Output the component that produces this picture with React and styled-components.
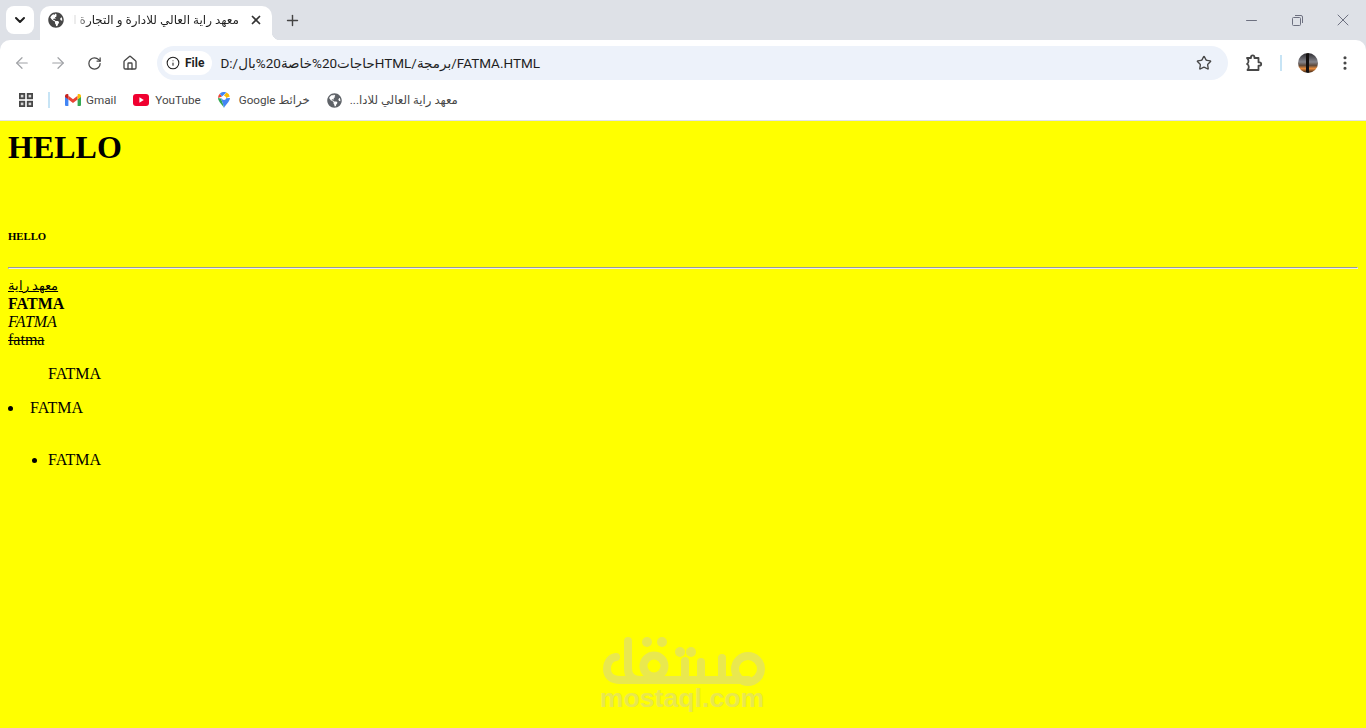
import styled, { createGlobalStyle } from 'styled-components'
import { ChevronDown, X, Plus, ArrowLeft, ArrowRight, RotateCw, House, Info, Star, Minus, EllipsisVertical } from 'lucide-react'
import { FaGlobeAmericas } from 'react-icons/fa'

const uiFont = 'Roboto, "Noto Sans", "DejaVu Sans", sans-serif'
const pageFont = '"Liberation Serif", "DejaVu Serif", serif'

const GlobalStyle = createGlobalStyle`
  html, body {
    margin: 0;
    padding: 0;
    height: 100%;
    overflow: hidden;
    background: #ffff00;
  }
`

function GmailIcon() {
  return (
    <svg width='16' height='12' viewBox='0 0 16 12'>
      <path d='M0 2v9a1 1 0 0 0 1 1h2.400V5.600z' fill='#4285f4' />
      <path d='M16 2v9a1 1 0 0 1-1 1h-2.400V5.600z' fill='#34a853' />
      <path d='M3.400 5.600 8 9l4.600-3.400V1.800L8 5.200 3.400 1.800z' fill='#ea4335' />
      <path d='M0 2c0-1.700 2-2.500 3.400-1.500v5.100L0 3.100z' fill='#c5221f' />
      <path d='M16 2c0-1.700-2-2.500-3.400-1.500v5.100L16 3.100z' fill='#fbbc04' />
    </svg>
  )
}

function YoutubeIcon() {
  return (
    <svg width='16' height='12' viewBox='0 0 16 12'>
      <rect width='16' height='12' rx='3' fill='#f00030' />
      <path d='M6.400 3.300 10.800 6l-4.400 2.700z' fill='#fff' />
    </svg>
  )
}

function MapsIcon() {
  return (
    <svg width='12' height='16' viewBox='0 0 12 16'>
      <path d='M6 16C4.800 13 0 9.500 0 6l3 0.500L5 12z' fill='#34a853' />
      <path d='M6 16c1.200-3 6-6.500 6-10L3 6.500 5 12z' fill='#4285f4' />
      <path d='M1.800 1.700A6 6 0 0 0 0 6l4-1.500z' fill='#ea4335' />
      <path d='M1.800 1.700 4 4.500 8.500.6A6 6 0 0 0 1.800 1.700z' fill='#4285f4' />
      <path d='M8.500.6 6 3.500l2 2.500 3.800-1.500A6 6 0 0 0 8.500.6z' fill='#fbbc04' />
      <circle cx='6' cy='6' r='2.100' fill='#fff' />
    </svg>
  )
}

function PuzzleIcon() {
  return (
    <svg width='18' height='18' viewBox='0 0 18 18' fill='none' stroke='#474747' strokeWidth='1.800' strokeLinejoin='round'>
      <path d='M2 4h4V3a1.700 1.700 0 0 1 3.400 0v1h4.100v4.300h1a1.700 1.700 0 0 1 0 3.400h-1V16H2.500c1-1 1.300-2 1.300-3S3 10.500 2 10c1-.5 1.500-1.500 1.500-3S3 5 2 4z' />
    </svg>
  )
}

function RestoreIcon() {
  return (
    <svg width='11' height='11' viewBox='0 0 11 11' fill='none' stroke='#6d7080' strokeWidth='1'>
      <rect x='0.500' y='2.500' width='8' height='8' rx='1' />
      <path d='M3 .5h6a1.500 1.500 0 0 1 1.500 1.500v6' />
    </svg>
  )
}

function AppsIcon() {
  return (
    <svg width='16' height='16' viewBox='0 0 16 16' fill='#d8d8d8' stroke='#474747' strokeWidth='1.800'>
      <rect x='1.900' y='1.900' width='4.400' height='4.400' />
      <rect x='9.700' y='1.900' width='4.400' height='4.400' />
      <rect x='1.900' y='9.700' width='4.400' height='4.400' />
      <rect x='9.700' y='9.700' width='4.400' height='4.400' />
    </svg>
  )
}

// the viewBox is in page pixels, which keeps the mark easy to line up
function MostaqlMark() {
  return (
    <svg width='170' height='52' viewBox='598 636 170 52' fill='none' stroke='#e9e84f' strokeWidth='8' strokeLinecap='round' strokeLinejoin='round'>
      <path d='M616 657C609 658 607 664 607 669C607 676 612 680 620 680H748' />
      <path d='M628 641V668C628 676 632 680 640 680' />
      <circle cx='654' cy='666' r='10.500' />
      <circle cx='748' cy='669' r='13' />
      <path d='M685 661V680M701 662V680M722 658V680' />
      <g fill='#e9e84f' stroke='none'>
        <circle cx='647' cy='642' r='5' />
        <circle cx='662' cy='642' r='5' />
        <circle cx='680' cy='652' r='5' />
        <circle cx='691' cy='652' r='5' />
      </g>
    </svg>
  )
}

export default function App() {
  return (
    <Window>
      <GlobalStyle />
      <TitleBar>
        <TabSearch><ChevronDown size={16} strokeWidth={3} /></TabSearch>
        <Tab>
          <FaGlobeAmericas size={16} color='#474747' />
          <TabTitle dir='rtl'>معهد راية العالي للادارة و التجارة الخارجية</TabTitle>
          <X size={14} strokeWidth={3} color='#333' />
        </Tab>
        <NewTab><Plus size={17} strokeWidth={2} /></NewTab>
        <WindowControls>
          <WindowControl><Minus size={17} absoluteStrokeWidth strokeWidth={1} /></WindowControl>
          <WindowControl><RestoreIcon /></WindowControl>
          <WindowControl><X size={20} absoluteStrokeWidth strokeWidth={1} /></WindowControl>
        </WindowControls>
      </TitleBar>

      <Toolbar>
        <NavButton $muted><ArrowLeft size={18} strokeWidth={1.6} /></NavButton>
        <NavButton $muted><ArrowRight size={18} strokeWidth={1.6} /></NavButton>
        <NavButton><RotateCw size={15} strokeWidth={2} /></NavButton>
        <NavButton><House size={16} strokeWidth={2} /></NavButton>
        <Omnibox>
          <FileChip><Info size={14} strokeWidth={1.8} />File</FileChip>
          <Url>{'D:/\u200Eبال\u200E%20\u200Eخاصة\u200E%20\u200Eحاجات\u200EHTML/\u200Eبرمجة\u200E/FATMA.HTML'}</Url>
          <Star size={16} strokeWidth={2} color='#474747' />
        </Omnibox>
        <ToolbarActions>
          <PuzzleIcon />
          <ToolbarDivider />
          <Avatar />
          <EllipsisVertical size={18} strokeWidth={2.2} color='#474747' />
        </ToolbarActions>
      </Toolbar>

      <Bookmarks>
        <AppsIcon />
        <BookmarkDivider />
        <Bookmark $gap={5}><GmailIcon />Gmail</Bookmark>
        <Bookmark $gap={6}><YoutubeIcon />YouTube</Bookmark>
        <Bookmark $gap={9}><MapsIcon />{'Google \u200Eخرائط'}</Bookmark>
        <Bookmark $gap={8}><FaGlobeAmericas size={15} color='#5f6368' /><span dir='rtl'>معهد راية العالي للادا...</span></Bookmark>
      </Bookmarks>

      <Page>
        <Heading>HELLO</Heading>
        <SmallHeading>HELLO</SmallHeading>
        <Rule />
        <PageLink href='#'>معهد راية</PageLink>
        <br />
        <b>FATMA</b>
        <br />
        <i>FATMA</i>
        <br />
        <s>fatma</s>
        <Quote>FATMA</Quote>
        <OuterList>
          <OuterItem>FATMA</OuterItem>
        </OuterList>
        <InnerList>
          <li>FATMA</li>
        </InnerList>
      </Page>

      <Watermark>
        <MostaqlMark />
        <WatermarkText>mostaql.com</WatermarkText>
      </Watermark>
    </Window>
  )
}

const Window = styled.div`
  position: relative;
  display: flex;
  flex-direction: column;
  height: 728px;
  overflow: hidden;
  background: #dee1e7;
  font-family: ${uiFont};
`

const TitleBar = styled.div`
  display: flex;
  align-items: flex-end;
  height: 40px;
  padding-left: 6px;
  flex-shrink: 0;
`

const TabSearch = styled.div`
  display: flex;
  align-items: center;
  justify-content: center;
  width: 28px;
  height: 28px;
  margin-bottom: 6px;
  border-radius: 8px;
  background: #fff;
  color: #1f1f1f;
`

const Tab = styled.div`
  position: relative;
  display: flex;
  align-items: center;
  gap: 8px;
  width: 232px;
  height: 34px;
  margin-left: 6px;
  padding: 0 9px 6px 8px;
  box-sizing: border-box;
  border-radius: 10px 10px 0 0;
  background: #fff;

  &::after {
    content: '';
    position: absolute;
    right: -8px;
    bottom: 0;
    width: 8px;
    height: 8px;
    background: radial-gradient(circle at 100% 0, transparent 8px, #fff 8.500px);
  }
`

const TabTitle = styled.div`
  flex: 1;
  min-width: 0;
  margin-right: 2px;
  overflow: hidden;
  white-space: nowrap;
  font-size: 12px;
  color: #1f1f1f;
  mask-image: linear-gradient(to right, transparent 0, #000 18px);
`

const NewTab = styled.div`
  display: flex;
  align-items: center;
  justify-content: center;
  width: 28px;
  height: 28px;
  margin: 0 0 6px 6px;
  color: #444;
`

const WindowControls = styled.div`
  display: flex;
  height: 40px;
  margin-left: auto;
`

const WindowControl = styled.div`
  display: flex;
  align-items: center;
  justify-content: center;
  width: 46px;
  color: #6d7080;
`

const Toolbar = styled.div`
  display: flex;
  align-items: center;
  height: 40px;
  padding: 6px 12px 0 4px;
  box-sizing: border-box;
  flex-shrink: 0;
  border-radius: 10px 10px 0 0;
  background: #fff;
`

const NavButton = styled.div`
  display: flex;
  align-items: center;
  justify-content: center;
  width: 36px;
  height: 32px;
  color: ${props => props.$muted ? '#a0a2a6' : '#474747'};
`

const Omnibox = styled.div`
  display: flex;
  align-items: center;
  flex: 1;
  height: 34px;
  margin-left: 9px;
  padding: 0 16px 0 5px;
  border-radius: 17px;
  background: #edf2fa;
`

const FileChip = styled.div`
  display: flex;
  align-items: center;
  gap: 5px;
  height: 24px;
  padding: 0 8px 0 4px;
  border-radius: 12px;
  background: #fff;
  font-size: 12px;
  font-weight: 700;
  color: #1f1f1f;
`

const Url = styled.div`
  flex: 1;
  margin-left: 8px;
  white-space: nowrap;
  font-size: 13.500px;
  color: #1f1f1f;
`

const ToolbarActions = styled.div`
  display: flex;
  align-items: center;
  gap: 18px;
  margin-left: 17px;
`

const ToolbarDivider = styled.div`
  width: 2px;
  height: 16px;
  margin: 0 -2px 0 -1px;
  background: #c7e4f5;
`

const Avatar = styled.div`
  width: 20px;
  height: 20px;
  border-radius: 50%;
  background:
    linear-gradient(to right, transparent 42%, #14100f 42%, #14100f 56%, transparent 56%),
    linear-gradient(to bottom, #2c2b30 0, #85848a 45%, #5e4a3c 62%, #e88b3a 78%, #2a1a12 100%);
`

const Bookmarks = styled.div`
  display: flex;
  align-items: center;
  height: 41px;
  padding-left: 18px;
  box-sizing: border-box;
  flex-shrink: 0;
  background: #fff;
  border-bottom: 1px solid #e3e3e3;
`

const BookmarkDivider = styled.div`
  width: 2px;
  height: 16px;
  margin: 0 15px 0 14px;
  background: #c7e4f5;
`

const Bookmark = styled.div`
  display: flex;
  align-items: center;
  gap: ${props => props.$gap}px;
  margin-right: 17px;
  white-space: nowrap;
  font-size: 11.700px;
  color: #474747;
`

const Page = styled.div`
  flex: 1;
  padding: 8px;
  background: #ffff00;
  color: #000;
  font-family: ${pageFont};
  font-size: 16px;
`

const Heading = styled.h1`
  margin: 0;
  font-size: 32px;
`

const SmallHeading = styled.h6`
  margin: 64px 0 0;
  font-size: 10.720px;
`

const Rule = styled.hr`
  margin: 25px 0 7px;
`

const PageLink = styled.a`
  color: #000;
  font-size: 12.500px;
  line-height: 18px;
`

const Quote = styled.blockquote`
  margin: 16px 40px;
`

const OuterList = styled.ul`
  margin: 16px 0;
  padding: 0;
  list-style: none;
`

const OuterItem = styled.li`
  display: flex;
  align-items: center;

  &::before {
    content: '';
    width: 5px;
    height: 5px;
    margin-right: 17px;
    border-radius: 50%;
    background: #000;
  }
`

const InnerList = styled.ul`
  margin: 34px 0 0;
  padding-left: 40px;
`

const Watermark = styled.div`
  position: absolute;
  left: 598px;
  top: 636px;
  width: 170px;
  display: flex;
  flex-direction: column;
  align-items: center;
`

const WatermarkText = styled.div`
  margin-top: -3px;
  margin-left: -2px;
  font-family: "Liberation Sans", sans-serif;
  font-size: 26.700px;
  font-weight: bold;
  line-height: 27px;
  color: #e9e84f;
`
